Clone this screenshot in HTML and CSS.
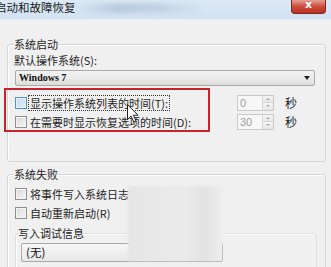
FILE: index.html
```html
<!DOCTYPE html>
<html lang="zh-CN">
<head>
    <meta charset="UTF-8">
    <title>启动和故障恢复</title>
    <link rel="stylesheet" href="styles.css">
</head>
<body>
    <div class="window">
        <!-- Title bar -->
        <div class="titlebar">
            <span class="title">启动和故障恢复</span>
            <span class="smudge"></span>
            <span class="close-btn">x</span>
        </div>

        <div class="client">
            <!-- System startup -->
            <fieldset class="group startup">
                <legend>系统启动</legend>
                <div class="field-label">默认操作系统(<u>S</u>):</div>
                <div class="combo">
                    <span class="combo-text">Windows 7</span>
                    <span class="combo-arrow"></span>
                </div>
                <div class="timer-rows">
                    <div class="timer-row">
                        <span class="check-line">
                            <span class="check hover"></span>
                            <span class="check-label focused">显示操作系统列表的时间(<u>T</u>):</span>
                        </span>
                        <span class="spin"><span class="spin-value">0</span><span class="spin-btns"><i class="up"></i><i class="down"></i></span></span>
                        <span class="unit">秒</span>
                    </div>
                    <div class="timer-row">
                        <span class="check-line">
                            <span class="check"></span>
                            <span class="check-label">在需要时显示恢复选项的时间(<u>D</u>):</span>
                        </span>
                        <span class="spin"><span class="spin-value">30</span><span class="spin-btns"><i class="up"></i><i class="down"></i></span></span>
                        <span class="unit">秒</span>
                    </div>
                </div>
            </fieldset>

            <!-- System failure -->
            <fieldset class="group failure">
                <legend>系统失败</legend>
                <div class="check-line row">
                    <span class="check"></span>
                    <span class="check-label">将事件写入系统日志(<u>W</u>)</span>
                </div>
                <div class="check-line row">
                    <span class="check"></span>
                    <span class="check-label">自动重新启动(<u>R</u>)</span>
                </div>
                <fieldset class="group debug">
                    <legend>写入调试信息</legend>
                    <div class="combo small">
                        <span class="combo-text cjk">(无)</span>
                        <span class="combo-arrow"></span>
                    </div>
                </fieldset>
            </fieldset>
        </div>

        <!-- Annotation, cursor and watermark patch drawn over the dialog -->
        <div class="mark-box"></div>
        <svg class="cursor" width="12" height="19" viewBox="0 0 12 19">
            <polygon points="0.5,0.5 0.5,15.5 4,12 6.8,18 9,17 6.3,11.2 11,11.2" fill="#fff" stroke="#222" stroke-width="1"/>
        </svg>
        <div class="blur-patch"></div>
    </div>
</body>
</html>
```

FILE: styles.css
```css
/* Page reset: the dialog fills the whole viewport */
body {
    margin: 0;
    font-family: "Noto Sans CJK SC", "Noto Sans", sans-serif;
    font-size: 11px;
    color: #1e1e1e;
    overflow: hidden;
}

.window {
    position: relative;
    width: 331px;
    height: 267px;
    background-color: #f0f0f0;
    overflow: hidden;
}

/* Title bar */
.titlebar {
    position: relative;
    height: 19px;
    display: flex;
    justify-content: space-between;
    align-items: flex-start;
    background: linear-gradient(to bottom, #dce9f6, #d2e2f2);
    border-bottom: 1px solid #e4ebf2;
}

.title {
    margin-left: -5px;
    line-height: 15px;
    font-size: 11.5px;
    color: #1a1a1a;
}

.smudge {
    position: absolute;
    left: 75px;
    top: 3px;
    width: 130px;
    height: 10px;
    background: linear-gradient(to right, rgba(150, 170, 195, 0), rgba(150, 170, 195, 0.45), rgba(150, 170, 195, 0.3), rgba(150, 170, 195, 0));
    filter: blur(2px);
}

.close-btn {
    width: 33px;
    height: 13px;
    margin-right: 5px;
    border: 1px solid #7a2a22;
    border-top: none;
    border-radius: 0 0 4px 4px;
    background: linear-gradient(to bottom, #e3a094, #cc4c3c 50%, #b8301f);
    color: #fff;
    font-family: "DejaVu Sans", sans-serif;
    font-weight: bold;
    font-size: 11px;
    line-height: 10px;
    text-align: center;
}

/* Dialog body */
.client {
    padding: 17px 5px 0 7px;
}

.group {
    margin: 0;
    padding: 0 6px;
    border: 1px solid #d5d5d5;
    border-radius: 3px;
    box-shadow: inset 1px 1px 0 #fff;
}

.group legend {
    padding: 0;
    line-height: 14px;
}

.startup {
    padding-bottom: 30px;
}

.failure {
    margin-top: 5px;
    height: 120px;
}

.field-label {
    margin-top: 2px;
    line-height: 14px;
}

u {
    text-decoration: none;
}

/* Combo boxes */
.combo {
    position: relative;
    margin: 3px 0 0 1px;
    width: 298px;
    height: 14px;
    border: 1px solid #a9a9a9;
    border-radius: 2px;
    background: linear-gradient(to bottom, #f3f3f3, #ebebeb 50%, #dcdcdc);
}

.combo-text {
    display: block;
    padding-left: 3px;
    font-family: "Liberation Serif", serif;
    font-weight: bold;
    font-size: 10px;
    line-height: 14px;
    color: #111;
}

.combo-text.cjk {
    font-family: "Noto Sans CJK SC", sans-serif;
    font-weight: normal;
    font-size: 11.5px;
    line-height: 17px;
    padding-left: 4px;
}

.combo-arrow {
    position: absolute;
    right: 4px;
    top: 5px;
    border-left: 3px solid transparent;
    border-right: 3px solid transparent;
    border-top: 4px solid #222;
}

.combo.small {
    margin: 3px 0 0 3px;
    width: 200px;
    height: 17px;
    background: linear-gradient(to bottom, #f6f6f6, #e8e8e8);
}

.combo.small .combo-arrow {
    top: 7px;
}

/* Check boxes */
.check-line {
    display: flex;
    align-items: center;
}

.check {
    box-sizing: border-box;
    width: 12px;
    height: 12px;
    margin-left: 1px;
    border: 1px solid #8f8f8f;
    background: linear-gradient(135deg, #d6d6d6, #f8f8f8);
    box-shadow: inset 0 0 0 1px #f4f4f4;
}

.check.hover {
    border-color: #5a8fc4;
    background: linear-gradient(135deg, #bcd9f2, #e4f1fc);
    box-shadow: inset 0 0 0 1px #eaf4fd;
}

.check-label {
    margin-left: 1px;
    padding: 0 1px;
    line-height: 14px;
    border: 1px solid transparent;
}

.check-label.focused {
    border: 1px dotted #333;
}

.row {
    height: 19px;
}

.failure legend + .row {
    margin-top: 3px;
}

/* Timer rows with spin boxes */
.timer-rows {
    margin-top: 7px;
}

.timer-row {
    display: grid;
    grid-template-columns: 212px 37px auto;
    column-gap: 11px;
    align-items: center;
    height: 19px;
}

.spin {
    display: flex;
    height: 14px;
    border: 1px solid #c9c9c9;
    background-color: #f7f7f7;
}

.spin-value {
    flex: 1;
    padding-left: 2px;
    font-family: "Liberation Sans", sans-serif;
    font-size: 11px;
    line-height: 14px;
    color: #a0a0a0;
}

.spin-btns {
    display: flex;
    flex-direction: column;
    width: 10px;
    border-left: 1px solid #d6d6d6;
}

.spin-btns i {
    flex: 1;
    position: relative;
    background: linear-gradient(to bottom, #f5f5f5, #e6e6e6);
}

.spin-btns i.up {
    border-bottom: 1px solid #d6d6d6;
}

.spin-btns i::after {
    content: "";
    position: absolute;
    left: 3px;
    top: 2px;
    border-left: 2px solid transparent;
    border-right: 2px solid transparent;
}

.spin-btns i.up::after {
    border-bottom: 2px solid #a8a8a8;
}

.spin-btns i.down::after {
    border-top: 2px solid #a8a8a8;
}

.unit {
    font-size: 12px;
    line-height: 14px;
}

/* Nested debug group */
.debug {
    margin: 4px 2px 0 1px;
    padding: 0 2px;
    height: 60px;
    border-color: #dedede;
}

/* Overlays */
.mark-box {
    position: absolute;
    left: 4px;
    top: 88px;
    width: 202px;
    height: 40px;
    border: 2.5px solid #c4242c;
}

.cursor {
    position: absolute;
    left: 127px;
    top: 104px;
}

.blur-patch {
    position: absolute;
    left: 128px;
    top: 186px;
    width: 94px;
    height: 75px;
    background: linear-gradient(to right, #e6e6e6, #ebebeb 60%, #e2e2e2 82%, #eeeeee);
    filter: blur(0.8px);
}
```
